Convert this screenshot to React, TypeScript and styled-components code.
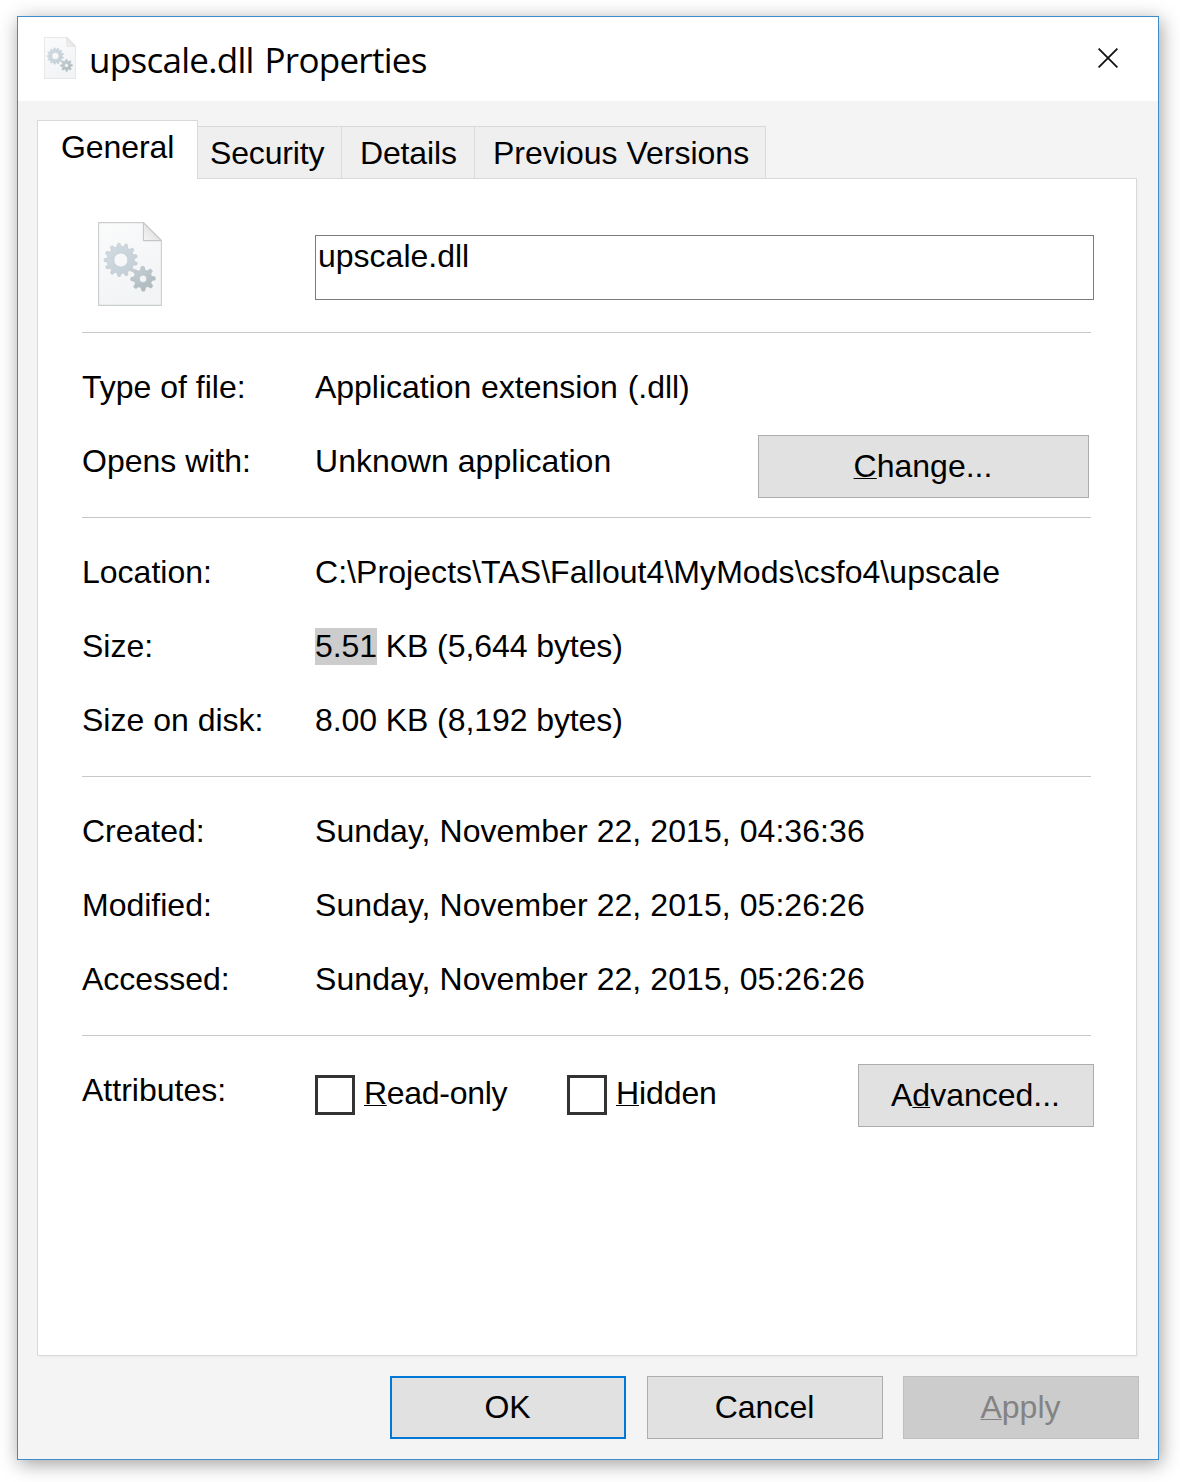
import React from 'react';
import styled, { createGlobalStyle } from 'styled-components';

const GlobalStyle = createGlobalStyle`
  * { box-sizing: border-box; }
  body {
    margin: 0;
    background: #fff;
    color: #000;
    font: 32px/36px "Liberation Sans", Arial, sans-serif;
  }
`;

const Desktop = styled.main`
  width: 1180px;
  height: 1482px;
  padding: 16px 21px 22px 17px;
  overflow: hidden;
`;

const Window = styled.section`
  height: 1444px;
  display: flex;
  flex-direction: column;
  border: 1px solid #3f8ccb;
  background: #f4f4f4;
  box-shadow: 2px 4px 18px rgba(0, 0, 0, 0.38);
`;

const TitleBar = styled.header`
  height: 84px;
  flex: none;
  display: flex;
  align-items: flex-start;
  padding: 20px 40px 0 26px;
  background: #fff;
`;

const Title = styled.h1`
  flex: 1;
  margin: -1px 0 0 13px;
  font: 400 35px/48px "Open Sans", "Noto Sans", sans-serif;
  letter-spacing: -0.72px;
  word-spacing: 2.5px;
`;

const CloseButton = styled.button`
  margin-top: 11px;
  padding: 0;
  border: 0;
  background: none;
  line-height: 0;
`;

const Body = styled.div`
  flex: 1;
  display: flex;
  flex-direction: column;
  padding: 19px 19px 20px;
`;

const TabList = styled.div`
  display: flex;
  align-items: flex-end;
  height: 59px;
  margin-bottom: -1px;
  flex: none;
`;

const Tab = styled.div<{ $active?: boolean; $width: number; $pad: number; $spacing?: number }>`
  position: relative;
  width: ${p => p.$width}px;
  height: ${p => (p.$active ? 59 : 53)}px;
  padding: 8px 0 0 ${p => p.$pad}px;
  border: 1px solid #d9d9d9;
  border-left-width: ${p => (p.$active ? 1 : 0)}px;
  border-bottom-width: ${p => (p.$active ? 0 : 1)}px;
  background: ${p => (p.$active ? '#fff' : '#efefef')};
  letter-spacing: ${p => p.$spacing ?? 0}px;
  white-space: nowrap;
`;

const Panel = styled.div`
  width: 1100px;
  height: 1178px;
  flex: none;
  padding: 0 42px 0 44px;
  border: 1px solid #d9d9d9;
  background: #fff;
  box-shadow: 2px 2px 0 #f0f0f0;
`;

const FileHeader = styled.div`
  height: 153px;
  display: grid;
  grid-template-columns: 233px 779px;
  align-items: start;
`;

const LargeIcon = styled.div`
  padding: 43px 0 0 16px;
  line-height: 0;
`;

const NameInput = styled.div`
  height: 65px;
  margin-top: 56px;
  padding: 2px;
  border: 1px solid #7a7a7a;
`;

const Section = styled.div`
  width: 1009px;
  padding-top: 36px;
  border-top: 1px solid #c8c8c8;
`;

const Row = styled.div`
  display: grid;
  grid-template-columns: 233px 1fr auto;
  align-items: start;
  height: 74px;
  white-space: nowrap;
`;

const Label = styled.span``;

const Value = styled.span<{ $spacing?: number; $words?: number }>`
  letter-spacing: ${p => p.$spacing ?? 0.07}px;
  word-spacing: ${p => p.$words ?? 0}px;
`;

const Selected = styled.span`
  display: inline-block;
  height: 37px;
  margin-bottom: -1px;
  background: #ccc;
`;

const Button = styled.button<{ $width?: number; $primary?: boolean }>`
  width: ${p => p.$width ?? 236}px;
  height: 63px;
  padding: 0 1px 2px 0;
  border: ${p => (p.$primary ? '2px solid #0078d7' : '1px solid #adadad')};
  border-radius: 0;
  background: #e1e1e1;
  color: #000;
  font: inherit;
  line-height: 36px;
  &:disabled {
    border-color: #bfbfbf;
    background: #ccc;
    color: #838383;
  }
`;

const ChangeButton = styled(Button)`
  margin: -8px 2px 0 0;
`;

const AdvancedButton = styled(Button)`
  margin: -8px -3px 0 0;
`;

const Key = styled.span`
  text-decoration: underline 1px;
  text-underline-offset: 1px;
  text-decoration-skip-ink: none;
`;

const Options = styled.div`
  display: grid;
  grid-template-columns: 252px 200px;
  padding-top: 3px;
`;

const Option = styled.label<{ $spacing?: number }>`
  display: flex;
  gap: 9px;
  letter-spacing: ${p => p.$spacing ?? 0}px;
`;

const Box = styled.span`
  width: 40px;
  height: 40px;
  border: 3px solid #333;
  background: #fff;
`;

const Actions = styled.footer`
  display: flex;
  justify-content: flex-end;
  margin-top: 20px;
`;

const CancelButton = styled(Button)`
  margin: 0 20px 0 21px;
`;

function gearPath(cx: number, cy: number, outer: number, root: number, hole: number, teeth: number, phase: number) {
  const step = (Math.PI * 2) / teeth;
  const at = (r: number, a: number) => `${(cx + r * Math.cos(a)).toFixed(2)} ${(cy + r * Math.sin(a)).toFixed(2)}`;
  let d = '';
  for (let i = 0; i < teeth; i++) {
    const a = phase + i * step;
    d += `${i ? 'L' : 'M'}${at(root, a - step * 0.32)}L${at(outer - 0.6, a - step * 0.17)}Q${at(outer + 0.4, a)} ${at(outer - 0.6, a + step * 0.17)}L${at(root, a + step * 0.32)}`;
  }
  return `${d}ZM${cx - hole} ${cy}a${hole} ${hole} 0 1 0 ${hole * 2} 0a${hole} ${hole} 0 1 0 ${-hole * 2} 0Z`;
}

const bigGear = gearPath(22.8, 38, 17, 13.6, 7, 13, -1.7);
const smallGear = gearPath(45, 56.8, 12.6, 9, 3.7, 8, -1.6);

function DllIcon({ width, soft = false }: { width: number; soft?: boolean }) {
  const id = soft ? 'small' : 'large';
  return (
    <svg width={width} height={(width * 84) / 64} viewBox="0 0 64 84" aria-hidden="true">
      <defs>
        <linearGradient id={`${id}-paper`} x1="0" y1="0" x2="0.4" y2="1">
          <stop offset="0" stopColor="#fafbfb" />
          <stop offset="1" stopColor="#f2f4f6" />
        </linearGradient>
        <linearGradient id={`${id}-fold`} x1="0" y1="1" x2="0.7" y2="0.3">
          <stop offset="0" stopColor="#f6f6f6" />
          <stop offset="1" stopColor="#dedede" />
        </linearGradient>
        <linearGradient id={`${id}-gear`} x1="0" y1="0" x2="1" y2="1">
          <stop offset="0" stopColor="#d3dce3" />
          <stop offset="1" stopColor="#c1ccd4" />
        </linearGradient>
        <linearGradient id={`${id}-cog`} x1="0" y1="0" x2="0.6" y2="1">
          <stop offset="0" stopColor="#c7d0d4" />
          <stop offset="1" stopColor="#aeb9c0" />
        </linearGradient>
      </defs>
      <path
        d="M.6.6H45.4L63.4 18.6V83.4H.6Z"
        fill={`url(#${id}-paper)`}
        stroke={soft ? '#dfe1e2' : '#cbcecf'}
        strokeWidth={soft ? 1.8 : 1.1}
      />
      <path
        d="M45.4.6V18.6H63.4Z"
        fill={`url(#${id}-fold)`}
        stroke={soft ? '#d6d7d8' : '#c4c6c7'}
        strokeWidth="1.1"
        strokeLinejoin="round"
      />
      <path d={bigGear} fill={`url(#${id}-gear)`} stroke="#bfc8ce" strokeWidth="0.6" fillRule="evenodd" />
      <path d={smallGear} fill={`url(#${id}-cog)`} stroke="#b0bac0" strokeWidth="0.6" fillRule="evenodd" />
    </svg>
  );
}

export default function App() {
  return (
    <>
      <GlobalStyle />
      <Desktop>
        <Window>
          <TitleBar>
            <DllIcon width={32} soft />
            <Title>upscale.dll Properties</Title>
            <CloseButton aria-label="Close">
              <svg width="20" height="20" viewBox="0 0 20 20">
                <path d="M.6.6 19.4 19.4M19.4.6.6 19.4" stroke="#111" strokeWidth="1.8" />
              </svg>
            </CloseButton>
          </TitleBar>
          <Body>
            <TabList>
              <Tab $active $width={161} $pad={23} $spacing={-0.1}>General</Tab>
              <Tab $width={144} $pad={12} $spacing={-0.15}>Security</Tab>
              <Tab $width={133} $pad={18} $spacing={-0.15}>Details</Tab>
              <Tab $width={291} $pad={18}>Previous Versions</Tab>
            </TabList>
            <Panel>
              <FileHeader>
                <LargeIcon>
                  <DllIcon width={64} />
                </LargeIcon>
                <NameInput>upscale.dll</NameInput>
              </FileHeader>
              <Section>
                <Row>
                  <Label>Type of file:</Label>
                  <Value $spacing={-0.03} $words={1}>Application extension (.dll)</Value>
                </Row>
                <Row>
                  <Label>Opens with:</Label>
                  <Value $spacing={0.05}>Unknown application</Value>
                  <ChangeButton $width={331}><Key>C</Key>hange...</ChangeButton>
                </Row>
              </Section>
              <Section>
                <Row>
                  <Label>Location:</Label>
                  <Value $spacing={0.06}>{'C:\\Projects\\TAS\\Fallout4\\MyMods\\csfo4\\upscale'}</Value>
                </Row>
                <Row>
                  <Label>Size:</Label>
                  <Value $spacing={-0.08}><Selected>5.51</Selected> KB (5,644 bytes)</Value>
                </Row>
                <Row>
                  <Label>Size on disk:</Label>
                  <Value $spacing={-0.08}>8.00 KB (8,192 bytes)</Value>
                </Row>
              </Section>
              <Section>
                <Row>
                  <Label>Created:</Label>
                  <Value>Sunday, November 22, 2015, 04:36:36</Value>
                </Row>
                <Row>
                  <Label>Modified:</Label>
                  <Value>Sunday, November 22, 2015, 05:26:26</Value>
                </Row>
                <Row>
                  <Label>Accessed:</Label>
                  <Value>Sunday, November 22, 2015, 05:26:26</Value>
                </Row>
              </Section>
              <Section>
                <Row>
                  <Label>Attributes:</Label>
                  <Options>
                    <Option $spacing={-0.3}><Box /><span><Key>R</Key>ead-only</span></Option>
                    <Option $spacing={-0.1}><Box /><span><Key>H</Key>idden</span></Option>
                  </Options>
                  <AdvancedButton>A<Key>d</Key>vanced...</AdvancedButton>
                </Row>
              </Section>
            </Panel>
            <Actions>
              <Button $primary>OK</Button>
              <CancelButton>Cancel</CancelButton>
              <Button disabled><Key>A</Key>pply</Button>
            </Actions>
          </Body>
        </Window>
      </Desktop>
    </>
  );
}
